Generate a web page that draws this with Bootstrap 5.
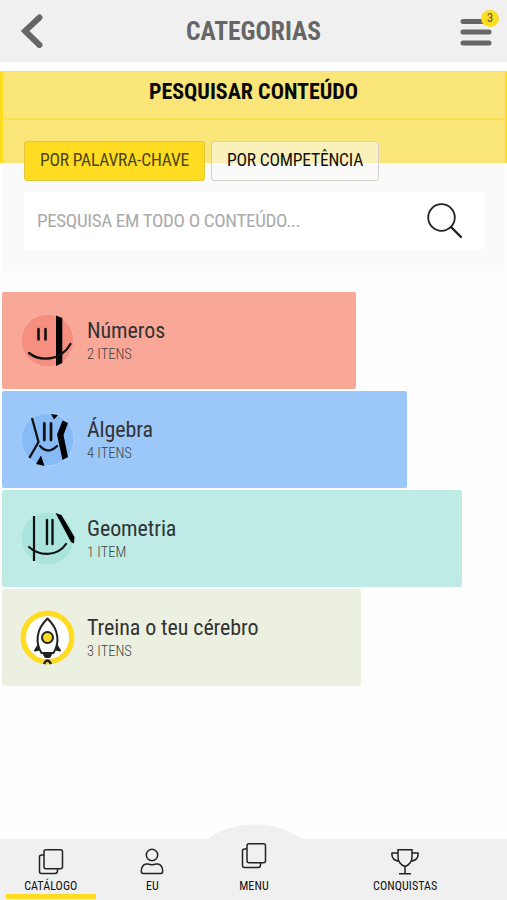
<!DOCTYPE html>
<html lang="pt">
<head>
<meta charset="utf-8">
<meta name="viewport" content="width=device-width, initial-scale=1">
<title>Categorias</title>
<link rel="stylesheet" href="https://cdn.jsdelivr.net/npm/bootstrap@5.3.0/dist/css/bootstrap.min.css">
<style>
body{font-family:"Roboto Condensed",Roboto,"Liberation Sans",sans-serif;font-stretch:75%;background:#fefefe;color:#222;line-height:1;height:900px;overflow:hidden}
svg{display:block;flex:none}
.topbar{height:62px;background:#f0f0f0;padding:0 15px 0 21px}
.topbar h1{font-size:25.5px;font-weight:700;color:#666;padding:0 0 0 4px}
.burger{width:32px;height:28px;margin-top:2px}
.count{width:18px;height:17px;background:#fddc22;color:#555;font-size:12.5px;top:-8px;right:-7px}
.search-panel{margin-top:9px;height:200px;border-left:3px solid transparent;border-right:3px solid transparent;background:linear-gradient(#ffdc1e,#ffdc1e) left top/3px 92px no-repeat border-box,linear-gradient(#ffdc1e,#ffdc1e) right top/2px 92px no-repeat border-box,linear-gradient(#fae678,#fae678) top/100% 92px no-repeat border-box,#fafafa padding-box}
.search-panel h2{height:49px;padding-top:9px;font-size:22px;font-weight:700;color:#080808;border-top:1px solid #fbe251;border-bottom:2px solid #fde04e;line-height:22px}
.tabs-row{padding:21px 0 0 21px;gap:6px}
.tab-btn{height:40px;border:1.5px solid #d2d0c8;border-radius:3px;background:rgba(250,250,250,.5);font-size:17.5px;letter-spacing:-.18px;color:#111;width:168px;line-height:36px}
.tab-btn span{display:block;margin-top:-2px}
.tab-btn.on{background:#ffdc22;border-color:#e3c63a;color:#4c4416;width:181px}
.search-box{margin:11px 20px 0 21px;height:57px;background:#fff;padding:0 22px 0 13px}
.search-box input{font-size:19px;letter-spacing:-.33px;color:#aaa;background:none;outline:0}
.search-box input::placeholder{color:#aaa;opacity:1}
.cats{margin:21px 0 0 2px;gap:2px}
.cat{height:97px;border-radius:2px;padding-left:18px;gap:12px}
.cat svg{width:55px;height:55px}
.cat h3{font-size:22px;letter-spacing:-.08px;font-weight:400;color:#333;margin:0 0 4px}
.cat p{font-size:14.5px;font-weight:300;color:#444;margin:0 0 1px}
.c1{width:354px;background:#f9a797}.c2{width:405px;background:#9bc8f9}.c3{width:460px;background:#beebe5}.c4{width:359px;background:#ecf0e1}
.dock{height:61px;background:#f0f0f0}
.hump{left:206px;top:-15px;width:97px;height:16px}
.dock a{font-size:12px;letter-spacing:.08px;color:#111;height:61px;text-decoration:none;width:101.6px}
.dock a.wide{width:200.800px}
.dock a span{margin-top:5px}
.dock a.on::after{content:"";width:90px;height:5px;background:#ffdc22;margin-top:2px}
</style>
</head>
<body class="d-flex flex-column">
<header class="topbar d-flex align-items-center justify-content-between">
<svg width="22" height="34" viewBox="0 0 22 34"><path d="M18.500 3.500 4 17 18.500 31" fill="none" stroke="#666" stroke-width="6" stroke-linecap="round"/></svg>
<h1 class="m-0"><span>CATEGORIAS</span></h1>
<div class="burger position-relative"><svg width="32" height="28"><path d="M3 3.500H29M3 14H29M3 25H29" stroke="#666" stroke-width="5" stroke-linecap="round"/></svg><span class="count position-absolute rounded-circle d-flex align-items-center justify-content-center">3</span></div>
</header>
<section class="search-panel">
<h2 class="m-0 text-center"><span>PESQUISAR CONTEÚDO</span></h2>
<div class="tabs-row d-flex">
<button class="tab-btn on p-0"><span>POR PALAVRA-CHAVE</span></button>
<button class="tab-btn p-0"><span>POR COMPETÊNCIA</span></button>
</div>
<div class="search-box d-flex align-items-center">
<input class="flex-grow-1 border-0 p-0" placeholder="PESQUISA EM TODO O CONTEÚDO..." aria-label="Pesquisa">
<svg width="35" height="36" viewBox="0 0 35 36"><g fill="none" stroke="#222" stroke-width="1.800"><circle cx="14.500" cy="14.500" r="13.300"/><path d="M24 24 34 34" stroke-width="2.400" stroke-linecap="round"/></g></svg>
</div>
</section>
<main class="cats d-flex flex-column">
<div class="cat c1 d-flex align-items-center">
<svg viewBox="0 0 55 55"><circle cx="27.500" cy="27.500" r="26.500" fill="#f78f80" stroke="#fab2a5"/><path d="M36 2.500 42.300 5V50L36 53Z"/><path d="M18.500 16V26.500M25.500 16V26.500" stroke="#111" stroke-width="2.600" stroke-linecap="round"/><path d="M9 40C20 49 41 48 50.500 31" fill="none" stroke="#111" stroke-width="2.300" stroke-linecap="round"/></svg>
<div><h3><span>Números</span></h3><p><span>2 ITENS</span></p></div></div>
<div class="cat c2 d-flex align-items-center">
<svg viewBox="0 0 55 55"><circle cx="27.500" cy="27.500" r="26.500" fill="#86bbf8" stroke="#add3fb"/><path d="M31 2 38 3 34 7.500ZM21 43.500 16 52 24.500 54ZM42.500 8.500 48 11 43.500 23 48 45 42.500 48 37 22.500Z"/><path d="M12 6 18.500 30 9.300 46" fill="none" stroke="#111" stroke-width="2.300"/><path d="M24.300 11.500V28M31 11.500V28" stroke="#111" stroke-width="2.800" stroke-linecap="round"/><path d="M20 34Q28 43 37 34" fill="none" stroke="#111" stroke-width="2.300" stroke-linecap="round"/></svg>
<div><h3><span>Álgebra</span></h3><p><span>4 ITENS</span></p></div></div>
<div class="cat c3 d-flex align-items-center">
<svg viewBox="0 0 55 55"><circle cx="27.500" cy="27.500" r="26.500" fill="#a9e5dd" stroke="#c6eee9"/><path d="M35.500 2 41.500 4 54.500 26 54 32.500 51 31Z"/><path d="M14 5V50" stroke="#111" stroke-width="2.200"/><path d="M27 9V33M32.500 9V33" stroke="#111" stroke-width="2.400" stroke-linecap="round"/><path d="M9 36C20 46 38 45 46 33" fill="none" stroke="#111" stroke-width="2.200" stroke-linecap="round"/></svg>
<div><h3><span>Geometria</span></h3><p><span>1 ITEM</span></p></div></div>
<div class="cat c4 d-flex align-items-center">
<svg viewBox="0 0 55 55"><circle cx="27.500" cy="27.500" r="24.300" fill="#fff" stroke="#ffdc22" stroke-width="5.400"/><g fill="#fff" stroke="#222" stroke-width="2" stroke-linejoin="round"><path d="M18.500 35 15 40.500 19.500 39.500M36.500 35 40 40.500 35.500 39.500" fill="#222"/><path d="M27.500 8.500C15.500 20 15.500 33 21.500 43H33.500C39.500 33 39.500 20 27.500 8.500Z"/><circle cx="27.500" cy="27.500" r="5.500" fill="#ffdc22"/><path d="M24 44.500H31L29.500 47H25.500Z" fill="#222"/><path d="M24 54Q27.500 47 31 54" fill="none" stroke-width="2.500"/></g></svg>
<div><h3><span>Treina o teu cérebro</span></h3><p><span>3 ITENS</span></p></div></div>
</main>
<footer class="dock mt-auto position-relative d-flex">
<svg class="hump position-absolute" viewBox="0 0 97 16"><path d="M0 16C28-5 69-5 97 16Z" fill="#f0f0f0"/></svg>
<a href="#" class="on d-flex flex-column align-items-center"><svg width="26" height="36" viewBox="0 0 26 36"><g fill="none" stroke="#222" stroke-width="1.500"><rect x="6" y="10.800" width="18.500" height="19" rx="2"/><path d="M6 16H3.500Q1.500 16 1.500 18V32.500Q1.500 34.500 3.500 34.500H17Q19.500 34.500 19.500 32V30"/></g></svg><span>CATÁLOGO</span></a>
<a href="#" class="d-flex flex-column align-items-center"><svg width="24" height="36" viewBox="0 0 24 36"><g fill="none" stroke="#222" stroke-width="1.500"><circle cx="12" cy="16" r="5.700"/><path d="M3 34.500Q1.300 34.500 1.300 32C1.300 26 5 24.500 8 25Q12 26.500 16 25C19 24.500 22.700 26 22.700 32Q22.700 34.500 21 34.500Z"/></g></svg><span>EU</span></a>
<a href="#" class="position-relative d-flex flex-column align-items-center"><svg width="26" height="36" viewBox="0 6 26 36"><g fill="none" stroke="#222" stroke-width="1.500"><rect x="6" y="10.800" width="18.500" height="19" rx="2"/><path d="M6 16H3.500Q1.500 16 1.500 18V32.500Q1.500 34.500 3.500 34.500H17Q19.500 34.500 19.500 32V30"/></g></svg><span>MENU</span></a>
<a href="#" class="wide d-flex flex-column align-items-center"><svg width="28" height="36" viewBox="0 0 28 36"><g fill="none" stroke="#222" stroke-width="1.500"><path d="M7 10.800H21V18Q21 25 14 27.500Q7 25 7 18ZM14 27.500V34.500M8 34.700H20M7 14H1Q0 21 8.500 22.500M21 14H27Q28 21 19.500 22.500"/></g></svg><span>CONQUISTAS</span></a>
</footer>
<script src="https://cdn.jsdelivr.net/npm/bootstrap@5.3.0/dist/js/bootstrap.bundle.min.js"></script>
</body>
</html>
